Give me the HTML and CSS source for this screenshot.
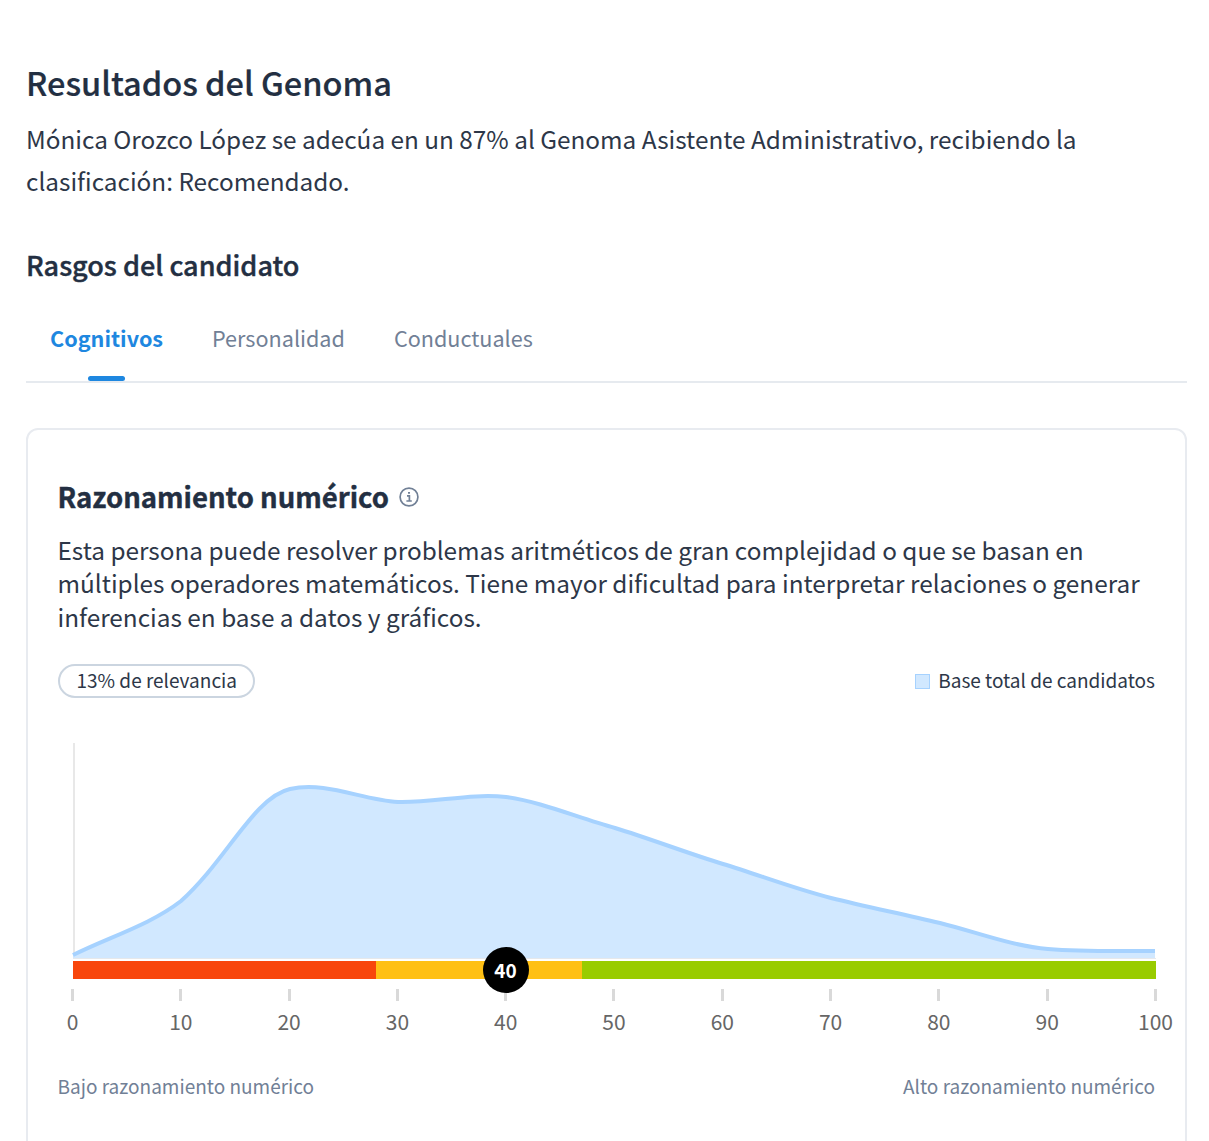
FILE: index.html
```html
<!DOCTYPE html>
<html lang="es">
<head>
<meta charset="utf-8">
<title>Resultados del Genoma</title>
<link rel="stylesheet" href="styles.css">
</head>
<body>
<main class="page">
  <h1 class="title">Resultados del Genoma</h1>
  <p class="summary">Mónica Orozco López se adecúa en un 87% al Genoma Asistente Administrativo, recibiendo la<br>clasificación: Recomendado.</p>
  <h2 class="subtitle">Rasgos del candidato</h2>
  <nav class="tabs">
    <a class="tab tab-active">Cognitivos</a>
    <a class="tab">Personalidad</a>
    <a class="tab">Conductuales</a>
  </nav>
  <section class="card">
    <header class="card-head">
      <h3 class="card-title">Razonamiento numérico</h3>
      <svg class="info" viewBox="0 0 20 20" width="20" height="20"><circle cx="10" cy="10" r="8.9"/><path d="M8 8.8h2.4v5M7.4 14h5.4M9 5.8h2"/></svg>
    </header>
    <p class="card-text">Esta persona puede resolver problemas aritméticos de gran complejidad o que se basan en<br>múltiples operadores matemáticos. Tiene mayor dificultad para interpretar relaciones o generar<br>inferencias en base a datos y gráficos.</p>
    <div class="meta">
      <span class="pill">13% de relevancia</span>
      <span class="legend"><i class="swatch"></i>Base total de candidatos</span>
    </div>
    <div class="chart">
      <svg class="plot" viewBox="0 0 1083 216" width="1083" height="216">
        <path class="axis" d="M1 0V214"/>
        <path class="area" d="M0 212C36 194 77 182 108 158C153 118 181 54 217 46C253 38 289 57 325 59C361 60 397 50 433 54C469 59 505 75 542 85C578 96 614 110 650 121C686 132 722 146 758 155C794 164 830 171 867 180C903 189 939 203 975 206C1011 209 1047 208 1082 208V215H0Z"/>
        <path class="curve" d="M0 212C36 194 77 182 108 158C153 118 181 54 217 46C253 38 289 57 325 59C361 60 397 50 433 54C469 59 505 75 542 85C578 96 614 110 650 121C686 132 722 146 758 155C794 164 830 171 867 180C903 189 939 203 975 206C1011 209 1047 208 1082 208"/>
        <path class="baseline" d="M0 215.5H1083"/>
      </svg>
      <div class="range"><span class="score">40</span></div>
      <div class="scale">
        <span>0</span><span>10</span><span>20</span><span>30</span><span>40</span><span>50</span><span>60</span><span>70</span><span>80</span><span>90</span><span>100</span>
      </div>
    </div>
    <footer class="ends"><span>Bajo razonamiento numérico</span><span>Alto razonamiento numérico</span></footer>
  </section>
</main>
</body>
</html>
```
FILE: styles.css
```css
* { box-sizing: border-box; }
body { margin: 0; height: 1141px; overflow: hidden; background: #fff; color: #2d3748; font-family: "Noto Sans CJK SC", "Open Sans", sans-serif; }
h1, h2, h3, p { margin: 0; white-space: nowrap; }
h1, h2, h3 { color: #232f42; }
.page { padding: 58px 22px 0 26px; }
.title { font-size: 32.55px; font-weight: 500; line-height: 48px; -webkit-text-stroke: 0.2px; }
.summary { margin-top: 12px; font-size: 24.34px; line-height: 42px; }
.subtitle { margin-top: 45px; font-size: 27.05px; font-weight: 500; line-height: 36px; -webkit-text-stroke: 0.4px; }
.tabs { display: flex; gap: 49px; height: 100px; padding: 37px 24px 0; border-bottom: 2px solid #e6eaef; color: #718096; font-size: 21.6px; line-height: 36px; }
.tab { display: flex; flex-direction: column; align-items: center; justify-content: space-between; }
.tab-active { color: #1e87e0; font-weight: 700; }
.tab-active::after { content: ""; width: 37px; height: 5px; border-radius: 3px; background: #1e87e0; }
.card { width: 1161px; height: 760px; margin-top: 45px; padding: 48px 30px 0 29.5px; border: 2px solid #e8ebf0; border-radius: 12px; }
.card-head { display: flex; align-items: center; gap: 10px; height: 36px; }
.card-title { font-size: 27.5px; font-weight: 700; line-height: 36px; -webkit-text-stroke: 0.4px; }
.info { margin-top: 2px; fill: none; stroke: #718096; stroke-width: 1.7; }
.card-text { margin-top: 18.5px; font-size: 24.35px; line-height: 33.5px; }
.meta { display: flex; justify-content: space-between; align-items: center; margin-top: 30.5px; font-size: 19px; line-height: 30px; }
.pill { width: 197px; padding: 0 0 0 17px; border: 2px solid #cbd5e0; border-radius: 17px; line-height: 28px; height: 34px; white-space: nowrap; }
.legend { display: flex; align-items: center; gap: 8px; margin-top: -2px; }
.swatch { width: 15px; height: 15px; margin-top: 3px; border: 1.5px solid #a6d2ff; background: #d1e8ff; }
.chart { margin: 45px 0 0 15px; width: 1083px; }
.plot { display: block; overflow: visible; }
.axis { stroke: #e8e8e8; stroke-width: 2; }
.area { fill: #d1e8ff; }
.curve { fill: none; stroke: #a6d2ff; stroke-width: 4; }
.baseline { stroke: #e6e8eb; stroke-width: 1; }
.range { position: relative; height: 18px; margin-top: 2px; background: linear-gradient(90deg, #f8460c 0 303px, #ffc015 303px 509px, #9c0 509px); }
.score { position: absolute; left: 410px; top: -14px; width: 46px; height: 46px; border-radius: 50%; background: #000; color: #fff; font-size: 19px; font-weight: 700; line-height: 46px; text-align: center; }
.scale { display: flex; justify-content: space-between; margin: 10px -30px 0; color: #666; font-size: 21px; line-height: 30px; }
.scale span { display: flex; flex-direction: column; align-items: center; width: 60px; }
.scale span::before { content: ""; width: 3px; height: 12px; margin-bottom: 5px; background: #d9d9d9; }
.ends { display: flex; justify-content: space-between; margin-top: 35px; color: #718096; font-size: 19px; line-height: 30px; }
```
